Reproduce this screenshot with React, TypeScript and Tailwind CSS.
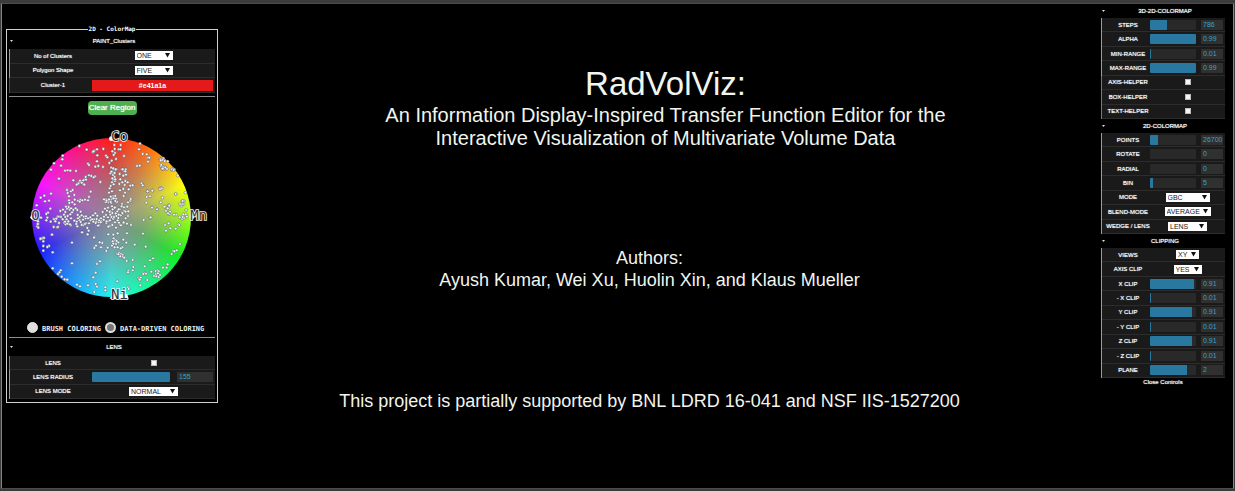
import { useId, useState, type ReactNode } from "react";

type RowProps = { label: string; wide?: boolean; tone?: "cyan" | "violet" | "red"; htmlFor?: string; children: ReactNode };

const tones = {
  cyan: "bg-[#35c4de]",
  violet: "bg-[#8a6c92]",
  red: "bg-[#b3201f]",
};

function Row({ label, wide, tone = "cyan", htmlFor, children }: RowProps) {
  return (
    <li className="flex min-w-0 items-stretch">
      <span className={`w-px shrink-0 ${tones[tone]}`} />
      <div className="flex min-w-0 flex-1 items-center border-b border-[#2c2c2c] bg-[#1a1a1a]">
        <label
          htmlFor={htmlFor}
          className={`shrink-0 text-center text-[6px] leading-[8px] whitespace-nowrap text-white [text-shadow:0_0_1px_#fff] ${wide ? "w-[82px] pl-1" : "w-[48px] pl-1"}`}
        >
          {label}
        </label>
        <div className="flex min-w-0 flex-1 items-center justify-center">{children}</div>
      </div>
    </li>
  );
}

type SelectRowProps = { label: string; value: string; width: string; wide?: boolean };

function SelectRow({ label, value, width, wide }: SelectRowProps) {
  const id = useId();
  return (
    <Row label={label} wide={wide} htmlFor={id}>
      <span className={`relative flex ${width}`}>
        <select
          id={id}
          defaultValue={value}
          className="h-[9px] w-full appearance-none bg-white pl-[2px] text-[7px] leading-[9px] text-[#222]"
        >
          <option>{value}</option>
        </select>
        <svg viewBox="0 0 5 5" className="pointer-events-none absolute top-[2px] right-[3px] size-[5px]" aria-hidden="true">
          <path d="M0 0H5L2.5 4.6Z" fill="#111" />
        </svg>
      </span>
    </Row>
  );
}

type SliderRowProps = { label: string; value: string; fill: number; wide?: boolean };

function SliderRow({ label, value, fill, wide }: SliderRowProps) {
  const id = useId();
  const [level, setLevel] = useState(fill);
  return (
    <Row label={label} wide={wide} htmlFor={id}>
      <input
        id={id}
        type="range"
        min={0}
        max={100}
        value={level}
        onChange={(e) => setLevel(Number(e.target.value))}
        className="h-[10px] w-0 min-w-0 flex-1 appearance-none rounded-[1px] [&::-webkit-slider-thumb]:size-0 [&::-webkit-slider-thumb]:appearance-none"
        style={{ background: `linear-gradient(to right, #2878a0 ${level}%, #292929 ${level}%)` }}
      />
      <input
        aria-label={`${label} value`}
        defaultValue={value}
        className={`h-[10px] shrink-0 bg-[#303030] pl-[2px] text-[7px] leading-[10px] text-[#36a2d6] ${wide ? "mr-[2px] ml-[7px] w-[36px]" : "mr-[2px] ml-[5px] w-[22px]"}`}
      />
    </Row>
  );
}

function CheckRow({ label, wide }: { label: string; wide?: boolean }) {
  const id = useId();
  return (
    <Row label={label} wide={wide} tone="violet" htmlFor={id}>
      <input id={id} type="checkbox" className="size-[6px] appearance-none border border-[#bbb] bg-[#f5f5f5] checked:bg-[#2878a0]" />
    </Row>
  );
}

function Folder({ title, height, rows, children }: { title: string; height: string; rows: string; children: ReactNode }) {
  return (
    <section>
      <button type="button" className={`flex w-full items-center ${height}`}>
        <svg viewBox="0 0 3 2" className="ml-px h-[2px] w-[3px]" aria-hidden="true">
          <path d="M0 0H3L1.5 2Z" fill="#ddd" />
        </svg>
        <span className="flex-1 text-center text-[6px] leading-[8px] text-white [text-shadow:0_0_1px_#fff]">{title}</span>
      </button>
      <ul className={`grid auto-rows-fr grid-cols-1 ${rows}`}>{children}</ul>
    </section>
  );
}

// Sample positions on the wheel, as x,y pairs grouped by area.
const upper =
  "178,78 200,89 219,97 223,93 231,88 250,87 258,107 232,106 220,94 128,107 127,118 102,130 93,149 123,137 135,152 143,151 151,152 168,153 204,131 207,135 226,140 231,124 235,138 249,141 262,112 283,75 302,75 284,87 296,88 277,94 285,99 281,105 301,88 312,108 288,117 275,122 268,129 360,71 357,88 368,102 380,103 384,113 388,113 384,125 359,137 351,138 420,117 425,119 430,115 424,123 443,124 422,138 428,140 436,141 430,148 438,146 426,146 455,149 459,147 463,149 473,167 116,176 181,187 186,190 193,179 176,188 172,191 190,192 197,171 207,166 214,168 225,169 241,187 160,181 274,143 280,147 287,150 281,159 276,155 289,148 271,160 279,165 284,171 279,179 285,183 276,187 272,198 281,193 269,205 276,214 267,218 280,229 275,238 288,236 291,246 266,247 254,241 258,238 306,148 313,153 317,148 318,164 310,168 301,178 307,187 316,183 323,187 314,195 298,192 310,207 327,208 331,197 338,195 365,190 368,196 382,214 397,211 380,231 420,204 424,203 422,247 427,233 411,267 396,262 467,222 486,244 491,252 492,243 484,257 446,256 443,265 450,275 436,260 333,241 324,247";
const lower =
  "54,34 52,49 55,42 101,27 113,20 117,39 111,52 133,38 137,43 145,40 152,46 172,49 170,35 187,67 203,74 206,62 223,81 190,45 198,40 207,25 212,31 222,28 229,35 236,37 237,46 244,34 252,31 259,39 267,33 273,23 280,27 269,48 265,73 280,74 293,70 288,53 300,43 293,31 321,70 333,45 311,40 369,71 371,30 391,23 344,104 377,110 319,98 310,89 295,97 307,112 302,115 281,85 286,91 278,94 290,93 280,101 288,102 276,107 284,112 293,112 263,113 259,123 247,99 243,112 228,107 223,114 239,97 61,87 68,84 70,94 96,74 87,108 82,111 70,122 98,127 70,108 156,98 156,160 98,175 122,181 118,187 114,192 125,200 134,208 142,209 171,224 180,229 204,226 227,188 220,202 231,162 240,154 227,222 231,230 223,246 256,232 256,241 292,131 297,129 303,132 308,135 301,139 309,141 295,133 313,143 320,153 338,150 399,145 390,151 340,171 338,181 325,182 324,187 292,214 324,232 326,237 355,203 358,206 362,203 359,209 375,190 378,191 370,192 374,169 382,210 361,226 394,185 407,183 413,181 416,184 408,192 414,190 402,198 409,199 416,201 420,195 429,173 443,163 440,173 455,132 460,122 463,124 470,121 480,102 435,45 438,62 446,40 451,55 467,56 475,43 478,45 486,27 492,24 497,13 501,20 490,13 447,13 468,14";
const left =
  "87,11 32,68 43,62 63,56 57,77 45,79 61,101 20,91 33,128 52,128 54,113 49,117 49,136 23,147 25,158 38,190 32,191 42,189 66,179 84,156 71,156 73,133 79,131 87,125 76,139 91,108 93,126 102,119 106,126 110,133 105,140 112,146 120,148 115,139 123,130 113,123 121,118 119,104 111,101 108,95 116,96 123,100 130,105 137,100 134,88 127,82 134,74 117,64 113,54 123,49 111,45 128,45 133,60 117,76 118,84 144,77 151,75 157,76 165,74 174,76 149,80 177,66 182,50 150,17 155,23 160,16 145,26 140,29 168,14 163,29 191,7 211,21 143,120 149,126 155,121 162,125 167,130 159,134 149,136 144,130 152,141 168,124 174,130 181,127 186,133 190,140 177,145 165,147 155,150 172,159 156,172 173,178 192,188 200,132 208,136 213,130 221,134 197,144 204,152 212,142 222,125 228,120 234,127 241,119 245,126 240,136 230,139 250,131 259,123 265,129 272,121 255,142 267,143 247,150 273,151 235,155 231,107 241,109 248,103 256,97 262,109 269,103 278,116 287,130 283,108 244,84 237,77 228,82 248,70 242,65 256,63 276,87 292,95 281,142 291,146 142,105 152,110 126,112 106,111 99,104 98,133 133,137 139,147 62,140 202,122 196,115 189,121";
const right =
  "12,208 20,212 27,208 32,216 41,205 46,213 36,229 44,233 24,233 15,236 8,246 29,246 37,249 47,250 56,238 65,229 72,232 77,245 85,244 84,258 91,212 71,198 60,181 75,188 70,177 86,178 92,207 67,249 56,254 42,261 152,262 156,233 171,238 150,199 139,218 143,184 157,182 193,230 198,243 204,250 208,227 227,192 246,222 248,213 240,222 256,188 222,254 239,262 248,261 258,240 185,176 180,178 182,88 188,90 194,93 184,105 190,112 196,113 188,116 201,117 182,91 216,118 221,120 40,115 47,118 34,125 44,129 37,145 46,148 68,118 76,124 59,132 70,137 98,166 128,166";

function dots(source: string, dx: number, dy: number) {
  return source.split(" ").map((pair, i) => {
    const [x, y] = pair.split(",").map(Number);
    return <circle key={`${dx}-${i}`} cx={x + dx} cy={y + dy} r="4.2" />;
  });
}

function Wheel() {
  return (
    <div className="mt-3 ml-[11px] grid w-[194px]">
      <div className="col-start-1 row-start-1 mt-[11px] ml-[12px] size-[159px] rounded-full bg-[radial-gradient(circle,#8c8a92_0%,#8c8a92bb_28%,#8c8a9200_70%),conic-gradient(#ff1c14,#ff7a12_32deg,#ffff10_66deg,#a0ff14_90deg,#10f020_120deg,#18f890_150deg,#20f8f0_180deg,#1896ff_212deg,#1c1cff_245deg,#7a20ff_268deg,#ff10ff_296deg,#ff1090_328deg,#ff1c14)]" />
      <svg viewBox="0 21 582 540" className="col-start-1 row-start-1 h-[180px] w-full" role="img" aria-label="Element color wheel">
        <g fill="#f2f5fa" stroke="#3c4452" strokeOpacity="0.75" strokeWidth="1.6">
          {dots(upper, 0, 0)}
          {dots(lower, 0, 270)}
          {dots(left, 30, 165)}
          {dots(right, 240, 30)}
        </g>
        <g fill="#fff">
          <circle cx="274" cy="56" r="7" />
          <circle cx="38" cy="292" r="7" />
          <circle cx="516" cy="290" r="7" />
          <path d="M268 535L284 523H322L326 538H276Z" />
        </g>
        <g className="font-['DejaVu_Sans_Mono',monospace] text-[42px]" fill="#30343a" stroke="#f4f4f4" strokeWidth="5" paintOrder="stroke">
          <text x="273" y="62">Co</text>
          <text x="34" y="301">O</text>
          <text x="511" y="300">Mn</text>
          <text x="273" y="537">Ni</text>
        </g>
      </svg>
    </div>
  );
}

function Choice({ label, checked }: { label: string; checked?: boolean }) {
  return (
    <label className="flex items-center gap-1 font-['DejaVu_Sans_Mono',monospace] text-[7px] leading-[8px] font-bold whitespace-nowrap text-[#eee]">
      <input
        type="radio"
        name="coloring"
        defaultChecked={checked}
        className="size-[11px] shrink-0 appearance-none rounded-full border border-[#e4e4e4] bg-[#e0e0e0] checked:border-2 checked:border-[#ddd] checked:bg-[#777]"
      />
      <span className="pt-1">{label}</span>
    </label>
  );
}

function Rule() {
  return <hr className="h-px border-0 bg-[#8c8c8c]" />;
}

function ClusterPanel() {
  const colorId = useId();
  return (
    <fieldset className="mt-[21px] ml-1 w-[212px] min-w-0 shrink-0 self-start border border-[#d0d0d0] px-[2px] pb-[3px]">
      <legend className="mx-auto px-px font-['DejaVu_Sans_Mono',monospace] text-[6px] leading-[8px] font-bold text-white">
        2D - ColorMap
      </legend>
      <Folder title="PAINT_Clusters" height="h-4" rows="h-[44px]">
        <SelectRow wide label="No of Clusters" value="ONE" width="w-[38px]" />
        <SelectRow wide label="Polygon Shape" value="FIVE" width="w-[38px]" />
        <Row wide tone="red" label="Cluster-1" htmlFor={colorId}>
          <input
            id={colorId}
            defaultValue="#e41a1a"
            className="mr-[2px] h-[11px] min-w-0 flex-1 bg-[#e41a1a] text-center text-[7px] leading-[11px] font-bold text-white"
          />
        </Row>
      </Folder>
      <div className="pt-[3px]">
        <Rule />
      </div>
      <button
        type="button"
        className="mx-auto mt-1 flex h-[14px] w-[49px] items-center justify-center rounded-[4px] bg-[#4caf50] text-[8px] leading-[10px] whitespace-nowrap text-white [text-shadow:0_0_1px_#fff]"
      >
        Clear Region
      </button>
      <Wheel />
      <div className="mt-[14px] mb-1 flex h-3 items-center gap-1 pl-[18px]">
        <Choice label="BRUSH COLORING" />
        <Choice label="DATA-DRIVEN COLORING" checked />
      </div>
      <Rule />
      <Folder title="LENS" height="h-[18px]" rows="h-[43px]">
        <CheckRow wide label="LENS" />
        <SliderRow wide label="LENS RADIUS" value="155" fill={100} />
        <SelectRow wide label="LENS MODE" value="NORMAL" width="w-[49px]" />
      </Folder>
    </fieldset>
  );
}

function ControlPanel() {
  return (
    <aside className="mr-2 w-[124px] shrink-0">
      <Folder title="3D-2D-COLORMAP" height="h-[14px]" rows="h-[101px]">
        <SliderRow label="STEPS" value="786" fill={38} />
        <SliderRow label="ALPHA" value="0.99" fill={100} />
        <SliderRow label="MIN-RANGE" value="0.01" fill={2} />
        <SliderRow label="MAX-RANGE" value="0.99" fill={100} />
        <CheckRow label="AXIS-HELPER" />
        <CheckRow label="BOX-HELPER" />
        <CheckRow label="TEXT-HELPER" />
      </Folder>
      <Folder title="2D-COLORMAP" height="h-[14px]" rows="h-[101px]">
        <SliderRow label="POINTS" value="26700" fill={17} />
        <SliderRow label="ROTATE" value="0" fill={0} />
        <SliderRow label="RADIAL" value="0" fill={0} />
        <SliderRow label="BIN" value="5" fill={6} />
        <SelectRow label="MODE" value="GBC" width="w-[44px]" />
        <SelectRow label="BLEND-MODE" value="AVERAGE" width="w-[46px]" />
        <SelectRow label="WEDGE / LENS" value="LENS" width="w-[39px]" />
      </Folder>
      <Folder title="CLIPPING" height="h-[14px]" rows="h-[130px]">
        <SelectRow label="VIEWS" value="XY" width="w-[23px]" />
        <SelectRow label="AXIS CLIP" value="YES" width="w-[28px]" />
        <SliderRow label="X CLIP" value="0.91" fill={96} />
        <SliderRow label="- X CLIP" value="0.01" fill={2} />
        <SliderRow label="Y CLIP" value="0.91" fill={92} />
        <SliderRow label="- Y CLIP" value="0.01" fill={2} />
        <SliderRow label="Z CLIP" value="0.91" fill={92} />
        <SliderRow label="- Z CLIP" value="0.01" fill={2} />
        <SliderRow label="PLANE" value="2" fill={80} />
      </Folder>
      <button type="button" className="block w-full text-center text-[6px] leading-[8px] text-white [text-shadow:0_0_1px_#fff]">
        Close Controls
      </button>
    </aside>
  );
}

export default function App() {
  return (
    <div className="flex min-h-screen bg-[#3c3c3c] px-px pt-[3px] pb-[2px] font-['Liberation_Sans',Arial,sans-serif]">
      <div className="flex min-w-0 flex-1 items-start border border-x-[#858585] border-y-[#4c4c4c] bg-black">
        <ClusterPanel />
        <main className="min-w-0 flex-1 pt-[62px] pl-3 text-center text-[#f1f5ee]">
          <h1 className="text-[33px] leading-[36px]">RadVolViz:</h1>
          <h2 className="mt-[2px] text-[20px] leading-[23px]">
            An Information Display-Inspired Transfer Function Editor for the
            <br />
            Interactive Visualization of Multivariate Volume Data
          </h2>
          <div className="pr-8 text-[18px] leading-[22px]">
            <p className="mt-[97px]">
              Authors:
              <br />
              Ayush Kumar, Wei Xu, Huolin Xin, and Klaus Mueller
            </p>
            <p className="mt-[99px]">This project is partially supported by BNL LDRD 16-041 and NSF IIS-1527200</p>
          </div>
        </main>
        <ControlPanel />
      </div>
    </div>
  );
}
